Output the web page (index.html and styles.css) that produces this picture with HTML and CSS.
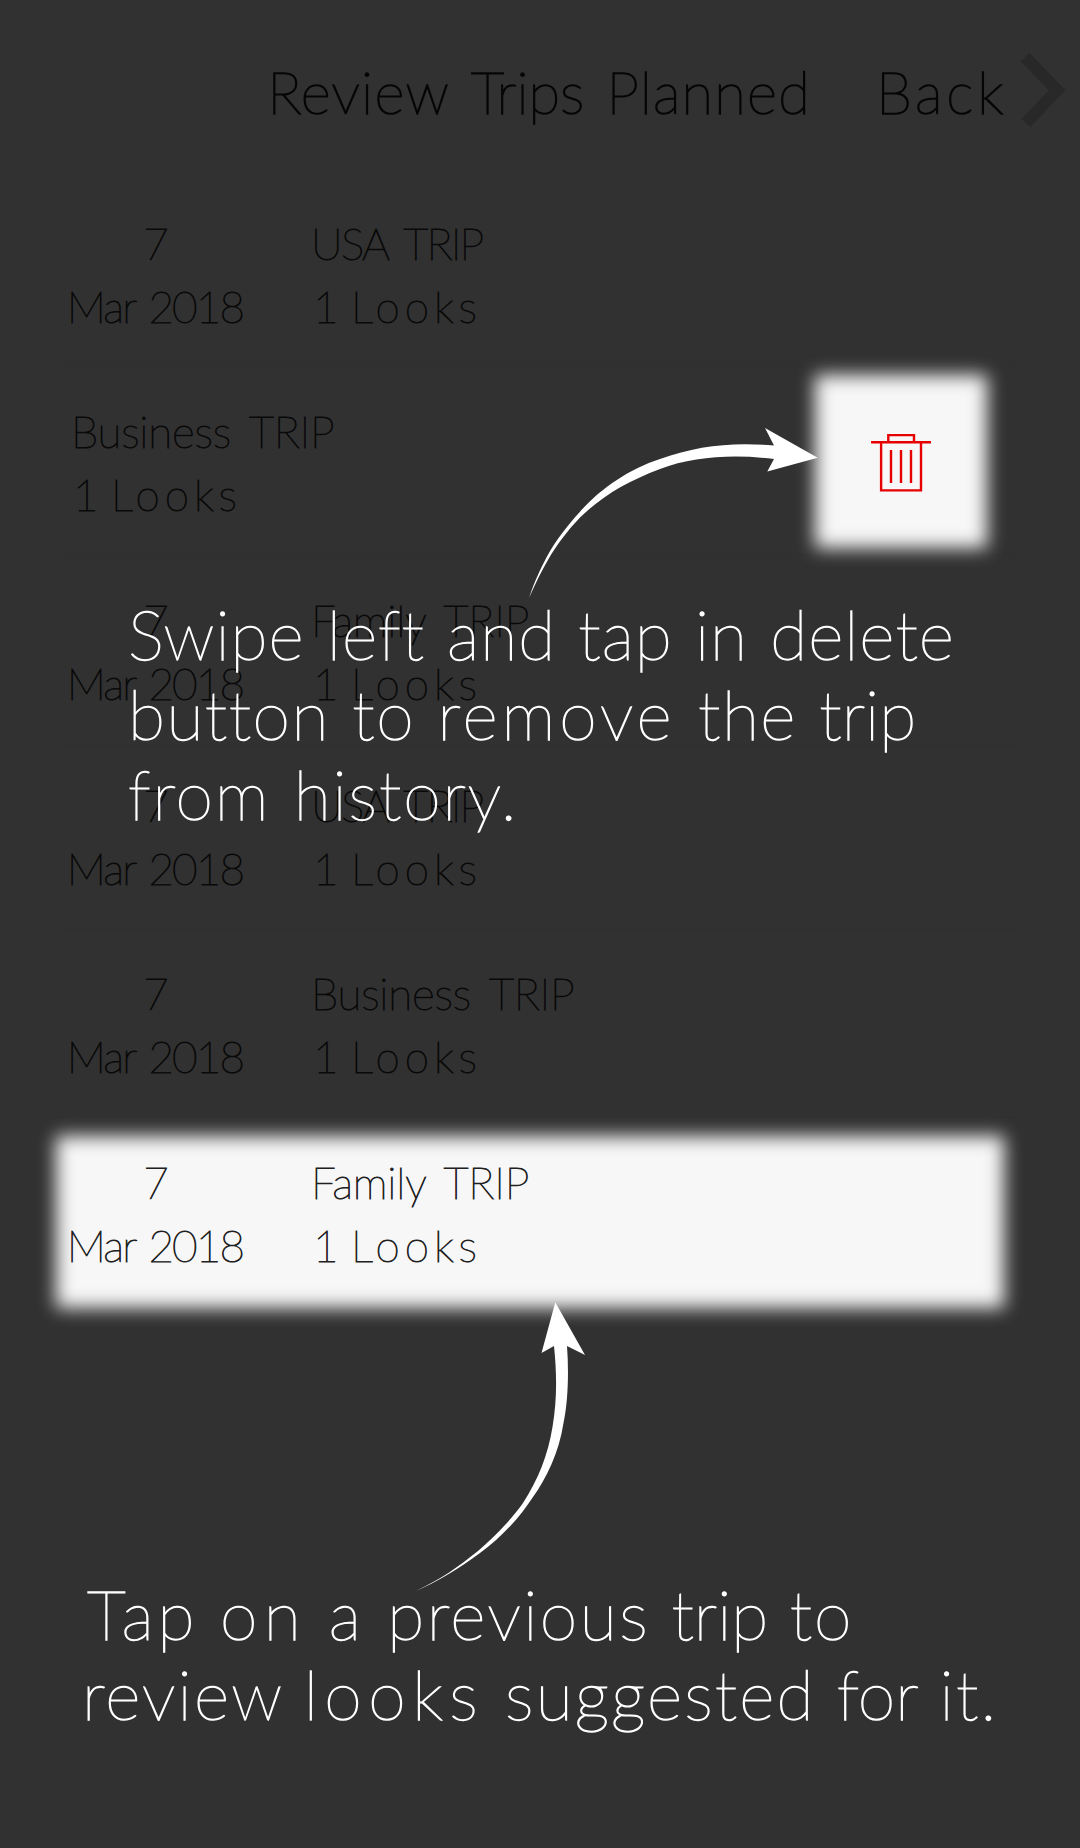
FILE: index.html
```
<!DOCTYPE html>
<html lang="en">
<head>
<meta charset="utf-8">
<title>Review Trips Planned</title>
<link rel="stylesheet" href="styles.css">
</head>
<body>
<main class="screen">
  <header class="bar">
    <h1 class="title">Review <span class="t0">Trips</span> Planned</h1>
    <span class="back">Back</span>
    <svg class="chevron" width="46" height="76" viewBox="0 0 46 76"><path d="M5 5 37 38 6 71" fill="none" stroke="#282828" stroke-width="12"/></svg>
  </header>

  <section class="list">
    <article class="row">
      <div class="date"><div>7</div><div>Mar 2018</div></div>
      <div class="info"><div class="caps">USA TRIP</div><div class="looks">1 Looks</div></div>
    </article>
    <article class="row swiped">
      <div class="info"><div class="name">Business TRIP</div><div class="looks">1 Looks</div></div>
      <div class="delete">
        <svg width="60" height="60" viewBox="0 0 60 60" fill="none" stroke="#e60000" stroke-width="2.4">
          <path d="M0 10.3H60M17.3 10V3.1H43V10M10.1 10.5V58.4H50V10.5M20 18V51M30 18V51M40 18V51"/>
        </svg>
      </div>
    </article>
    <article class="row">
      <div class="date"><div>7</div><div>Mar 2018</div></div>
      <div class="info"><div class="name">Family TRIP</div><div class="looks">1 Looks</div></div>
    </article>
    <article class="row short">
      <div class="date"><div>7</div><div>Mar 2018</div></div>
      <div class="info"><div class="caps">USA TRIP</div><div class="looks">1 Looks</div></div>
    </article>
    <article class="row">
      <div class="date"><div>7</div><div>Mar 2018</div></div>
      <div class="info"><div class="name">Business TRIP</div><div class="looks">1 Looks</div></div>
    </article>
    <article class="row lit">
      <div class="date"><div>7</div><div>Mar 2018</div></div>
      <div class="info"><div class="name">Family TRIP</div><div class="looks">1 Looks</div></div>
    </article>
  </section>

  <svg class="arrows" width="1080" height="1848" viewBox="0 0 1080 1848" fill="#fff">
    <path d="M529 598C535 580 541 568 546.7 557 556 540 567 526 580 511.7 600 489 629 469 660 459 697 446 730 442 774 445.5L765 428 817.7 457.7 767.3 471.5 774 459C735 454 694 456 660 469 628 481 602 496 580 517.5 567 531 556 546 548.5 559 542 570 535.5 583 529 598Z"/>
    <path d="M567 1346C569 1372 568 1402 563.5 1423 559 1453 546 1479 533 1497 520 1517 502 1537 480 1553 460 1568 437 1582 415.5 1591 440 1580 458 1567 478 1551 497 1535 513 1517 523 1503 538 1480 548 1455 552.5 1427 557 1400 557 1375 554 1346L541.5 1353 555.3 1302.3 585 1355Z"/>
  </svg>

  <p class="hint hint-delete">
    <span class="line l1">Swipe left and tap in delete</span>
    <span class="line l2"><span class="t1">button</span> to <span class="t4">remove</span> the <span class="t0">trip</span></span>
    <span class="line l3">from history.</span>
  </p>
  <p class="hint hint-open">
    <span class="line l4"><span class="t4">Tap</span> <span class="t6">on</span> <span class="t5">a</span> <span class="t2">previous</span> <span class="t0">trip</span> to</span>
    <span class="line l5">review <span class="t6">looks</span> suggested <span class="t0">for</span> it.</span>
  </p>
</main>
</body>
</html>
```

FILE: styles.css
```
* { box-sizing: border-box; }
body { margin: 0; background: #313131; font-family: Lato, "Liberation Sans", sans-serif; font-weight: 100; }
.screen { position: relative; width: 1080px; height: 1848px; overflow: hidden; }

.bar { display: flex; justify-content: flex-end; height: 179px; padding: 52px 14px 0 0; color: #050505; font-size: 58px; line-height: 80px; -webkit-text-stroke: 1.5px #050505; }
.title { margin: 0 65px 0 0; font: inherit; letter-spacing: 1.2px; word-spacing: 4.5px; }
.back { letter-spacing: 3.8px; margin-right: 13px; }
.chevron { display: block; }

.row { position: relative; display: grid; grid-template-columns: 184px 1fr; column-gap: 64px; height: 189px; margin: 0 63px 0 60px; padding: 33px 0 0 3px; border-bottom: 1px solid #2f2f2f; color: #090909; font-size: 44px; line-height: 62.5px; -webkit-text-stroke: 1px #090909; }
.row:first-child { height: 188px; }
.row.short { height: 184px; padding-top: 29px; }
.row.swiped { grid-template-columns: 1fr 172px; padding-left: 11px; padding-right: 30px; }
.date { text-align: center; letter-spacing: -1.8px; word-spacing: 3px; white-space: nowrap; }
.info { white-space: nowrap; }
.caps { letter-spacing: -1.8px; word-spacing: 7px; }
.name { letter-spacing: -0.2px; word-spacing: 7px; }
.looks { letter-spacing: 5px; word-spacing: -10px; padding-left: 2px; }

.delete { position: relative; display: flex; align-items: center; justify-content: center; height: 173px; margin-top: -25px; }
.delete svg { position: relative; }
.delete::before, .lit::before { content: ""; position: absolute; inset: 0; background: #f7f7f7; filter: blur(9px); }
.lit { border-bottom: 0; color: #202020; -webkit-text-stroke-color: #202020; }
.lit::before { inset: 18px 13px -1px -4px; }
.lit > div { position: relative; }

.arrows { position: absolute; inset: 0; }
.hint { position: absolute; margin: 0; color: #fff; font-size: 68px; line-height: 80px; white-space: nowrap; -webkit-text-stroke: 1.3px #fff; }
.line { display: block; }
.hint-delete { left: 128px; top: 594px; }
.hint-open { left: 82px; top: 1574px; }
.l1 { letter-spacing: 1px; word-spacing: 1.8px; }
.l2 { letter-spacing: 1.5px; word-spacing: 1.5px; }
.l3 { letter-spacing: 1.9px; word-spacing: 2px; }
.l4 { padding-left: 5px; letter-spacing: 2px; word-spacing: 0; }
.l5 { letter-spacing: 2.2px; word-spacing: -0.6px; }

/* Tracking of single words */
.t0 { letter-spacing: 0; }
.t1 { letter-spacing: 1.5px; }
.t2 { letter-spacing: 2.5px; }
.t4 { letter-spacing: 4px; }
.t5 { letter-spacing: 5px; }
.t6 { letter-spacing: 6.5px; }
```
